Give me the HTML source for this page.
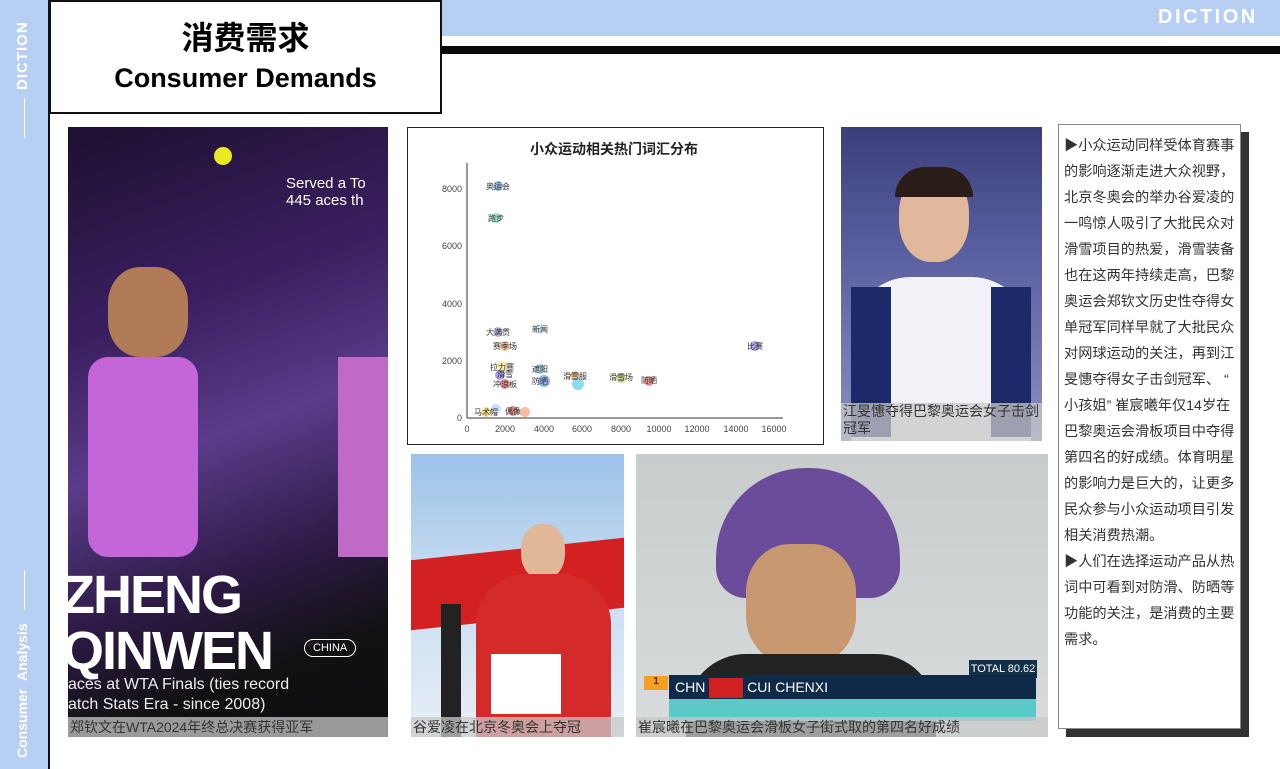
<!DOCTYPE html>
<html><head><meta charset="utf-8"><style>
*{margin:0;padding:0;box-sizing:border-box}
body{width:1280px;height:769px;overflow:hidden;background:#fff;position:relative;font-family:"Liberation Sans","Noto Sans CJK SC",sans-serif}
.abs{position:absolute}
.cap{position:absolute;left:0;right:0;bottom:0;height:20px;background:rgba(200,200,200,.75);color:#333;font-size:14px;line-height:20px;padding-left:2px;white-space:nowrap;overflow:hidden}
</style></head><body>
<div class="abs" style="left:0;top:0;width:48px;height:769px;background:#b7cff3"></div>
<div class="abs" style="left:48px;top:0;width:2px;height:769px;background:#111"></div>
<div class="abs" style="left:14px;top:10px;width:22px;height:80px;color:#fff;font-weight:bold;font-size:15px;writing-mode:vertical-rl;transform:rotate(180deg);letter-spacing:1px">DICTION</div>
<div class="abs" style="left:24px;top:98px;width:1px;height:40px;background:#fff"></div>
<div class="abs" style="left:24px;top:570px;width:1px;height:40px;background:#fff"></div>
<div class="abs" style="left:14px;top:612px;color:#fff;font-weight:bold;font-size:14px;writing-mode:vertical-rl;transform:rotate(180deg);height:146px;text-align:left">Consumer &nbsp;Analysis</div>
<div class="abs" style="left:442px;top:0;width:838px;height:36px;background:#b7cff3"></div>
<div class="abs" style="left:1158px;top:6px;color:#fff;font-weight:900;font-size:20px;letter-spacing:2.5px">DICTION</div>
<div class="abs" style="left:442px;top:46px;width:838px;height:8px;background:#0a0a0a"></div>
<div class="abs" style="left:49px;top:0;width:393px;height:114px;border:2px solid #111;background:#fff;text-align:center">
<div style="font-size:32px;font-weight:bold;margin-top:14px;line-height:40px;font-family:'Noto Sans CJK SC',sans-serif">消费需求</div>
<div style="font-size:27px;font-weight:bold;line-height:36px;margin-top:4px">Consumer Demands</div></div>

<div class="abs" style="left:68px;top:127px;width:320px;height:610px;background:linear-gradient(160deg,#1d1030 0%,#3a1f60 30%,#5a3c8a 50%,#2d1a46 70%,#111 85%,#0e0e12 100%);overflow:hidden">
<div class="abs" style="left:146px;top:20px;width:18px;height:18px;border-radius:50%;background:#e6ec21"></div>
<div class="abs" style="left:218px;top:48px;color:#fff;font-size:15px">Served a To<br>445 aces th</div>
<div class="abs" style="left:40px;top:140px;width:80px;height:90px;border-radius:40%;background:#b07b56"></div>
<div class="abs" style="left:20px;top:230px;width:110px;height:200px;background:#c466d8;border-radius:20px"></div>
<div class="abs" style="left:270px;top:230px;width:60px;height:200px;background:#c06ac8"></div>
<div class="abs" style="left:-6px;top:440px;color:#fff;font-weight:900;font-size:54px;line-height:56px;letter-spacing:-2px">ZHENG<br>QINWEN</div>
<div class="abs" style="left:236px;top:512px;border:1px solid #fff;border-radius:12px;color:#fff;font-size:11px;padding:2px 8px">CHINA</div>
<div class="abs" style="left:0;top:548px;color:#eee;font-size:16px;line-height:20px">aces at WTA Finals (ties record<br>atch Stats Era - since 2008)</div>
<div class="cap">郑钦文在WTA2024年终总决赛获得亚军</div></div>

<div class="abs" style="left:407px;top:127px;width:417px;height:318px;border:1px solid #222;background:#fff">
<svg width="417" height="318" style="position:absolute;left:-1px;top:-1px" font-family="Liberation Sans,Noto Sans CJK SC,sans-serif">
<text x="207" y="27" font-size="14" font-weight="bold" text-anchor="middle" fill="#222">小众运动相关热门词汇分布</text>
<line x1="60" y1="36" x2="60" y2="291" stroke="#333"/><line x1="60" y1="291" x2="376" y2="291" stroke="#333"/>
<g font-size="9" fill="#444" text-anchor="end"><text x="55" y="294">0</text><text x="55" y="237">2000</text><text x="55" y="180">4000</text><text x="55" y="122">6000</text><text x="55" y="65">8000</text></g>
<g font-size="9" fill="#444" text-anchor="middle"><text x="60" y="305">0</text><text x="98" y="305">2000</text><text x="137" y="305">4000</text><text x="175" y="305">6000</text><text x="214" y="305">8000</text><text x="252" y="305">10000</text><text x="290" y="305">12000</text><text x="329" y="305">14000</text><text x="367" y="305">16000</text></g>
<g opacity=".6">
<circle cx="91" cy="59" r="5" fill="#5b8fd6"/><circle cx="89" cy="91" r="5" fill="#5ccf9a"/><circle cx="91" cy="205" r="5" fill="#8888cc"/><circle cx="133" cy="202" r="5" fill="#aaddee"/><circle cx="98" cy="219" r="5" fill="#f0a060"/><circle cx="348" cy="219" r="5" fill="#7a66dd"/><circle cx="95" cy="239" r="5" fill="#f6e060"/><circle cx="93" cy="248" r="5" fill="#6a5ad8"/><circle cx="98" cy="257" r="5" fill="#d85050"/><circle cx="133" cy="242" r="5" fill="#6aaabb"/><circle cx="137" cy="254" r="6" fill="#4a80e0"/><circle cx="168" cy="249" r="5" fill="#e0a050"/><circle cx="171" cy="257" r="6" fill="#40c8e0"/><circle cx="214" cy="251" r="5" fill="#a0c040"/><circle cx="242" cy="254" r="5" fill="#d04040"/><circle cx="79" cy="285" r="5" fill="#f6d040"/><circle cx="89" cy="282" r="5" fill="#a0d0f0"/><circle cx="106" cy="284" r="5" fill="#d04040"/><circle cx="118" cy="285" r="5" fill="#f09060"/></g>
<g font-size="8" fill="#333" text-anchor="middle"><text x="91" y="62">奥运会</text><text x="89" y="94">跑步</text><text x="91" y="208">大满贯</text><text x="133" y="205">新闻</text><text x="98" y="222">赛季场</text><text x="348" y="222">比赛</text><text x="95" y="243">拉力赛</text><text x="98" y="250">滑雪</text><text x="98" y="260">冲浪板</text><text x="133" y="245">遮阳</text><text x="133" y="257">防晒</text><text x="168" y="252">滑雪服</text><text x="214" y="253">滑雪场</text><text x="242" y="256">防晒</text><text x="79" y="288">马术帽</text><text x="106" y="287">偶像</text></g>
</svg></div>

<div class="abs" style="left:841px;top:127px;width:201px;height:314px;background:linear-gradient(180deg,#3a3f7a 0%,#5a5fa0 40%,#8a8fc0 100%);overflow:hidden">
<div class="abs" style="left:58px;top:45px;width:70px;height:90px;border-radius:45%;background:#e2b89c"></div>
<div class="abs" style="left:54px;top:40px;width:78px;height:30px;border-radius:40px 40px 0 0;background:#2a1c18"></div>
<div class="abs" style="left:10px;top:150px;width:180px;height:170px;border-radius:60px 60px 0 0;background:#f2f2f6"></div>
<div class="abs" style="left:10px;top:160px;width:40px;height:150px;background:#1c2a6a"></div>
<div class="abs" style="left:150px;top:160px;width:40px;height:150px;background:#1c2a6a"></div>
<div class="cap" style="height:38px;line-height:17px;white-space:normal">江旻憓夺得巴黎奥运会女子击剑冠军</div></div>

<div class="abs" style="left:411px;top:454px;width:213px;height:283px;background:linear-gradient(180deg,#9cc2ea 0%,#c8dcf0 45%,#e8eef6 100%);overflow:hidden">
<div class="abs" style="left:0;top:95px;width:213px;height:70px;background:#d32020;transform:skewY(-6deg)"></div>
<div class="abs" style="left:110px;top:70px;width:44px;height:55px;border-radius:45%;background:#e0b898"></div>
<div class="abs" style="left:65px;top:120px;width:135px;height:170px;border-radius:50px 50px 0 0;background:#d52a2a"></div>
<div class="abs" style="left:30px;top:150px;width:20px;height:140px;background:#222"></div>
<div class="abs" style="left:80px;top:200px;width:70px;height:60px;background:#fff"></div>
<div class="cap">谷爱凌在北京冬奥会上夺冠</div></div>

<div class="abs" style="left:636px;top:454px;width:412px;height:283px;background:linear-gradient(180deg,#c8cccc 0%,#d8dcdc 100%);overflow:hidden">
<div class="abs" style="left:80px;top:14px;width:184px;height:130px;border-radius:90px 90px 30px 30px;background:#6a4c9a"></div>
<div class="abs" style="left:110px;top:90px;width:110px;height:120px;border-radius:40%;background:#c89870"></div>
<div class="abs" style="left:50px;top:200px;width:250px;height:100px;border-radius:60px 60px 0 0;background:#222"></div>
<div class="abs" style="left:333px;top:206px;width:68px;height:18px;background:#123048;color:#fff;font-size:11px;text-align:center;line-height:18px">TOTAL 80.62</div>
<div class="abs" style="left:8px;top:222px;width:24px;height:14px;background:#f4a020;font-size:10px;text-align:center">1</div>
<div class="abs" style="left:33px;top:221px;width:367px;height:24px;background:#0e2a48;color:#fff;font-size:14px;line-height:24px;padding-left:6px">CHN <span style="display:inline-block;width:34px;height:20px;background:#d02020;vertical-align:middle"></span> CUI CHENXI</div>
<div class="abs" style="left:33px;top:245px;width:367px;height:22px;background:#5cc8c8"></div>
<div class="cap">崔宸曦在巴黎奥运会滑板女子街式取的第四名好成绩</div></div>

<div class="abs" style="left:1066px;top:132px;width:183px;height:605px;background:#333"></div>
<div class="abs" style="left:1058px;top:124px;width:183px;height:605px;background:#fff;border:1px solid #888;padding:8px 0 0 5px;font-size:14.2px;line-height:26px;color:#333;white-space:nowrap;overflow:hidden;font-family:'Liberation Sans','Noto Sans CJK SC',sans-serif">▶小众运动同样受体育赛事<br>的影响逐渐走进大众视野，<br>北京冬奥会的举办谷爱凌的<br>一鸣惊人吸引了大批民众对<br>滑雪项目的热爱，滑雪装备<br>也在这两年持续走高，巴黎<br>奥运会郑钦文历史性夺得女<br>单冠军同样早就了大批民众<br>对网球运动的关注，再到江<br>旻憓夺得女子击剑冠军、 “<br>小孩姐” 崔宸曦年仅14岁在<br>巴黎奥运会滑板项目中夺得<br>第四名的好成绩。体育明星<br>的影响力是巨大的，让更多<br>民众参与小众运动项目引发<br>相关消费热潮。<br>▶人们在选择运动产品从热<br>词中可看到对防滑、防晒等<br>功能的关注，是消费的主要<br>需求。</div>
</body></html>
